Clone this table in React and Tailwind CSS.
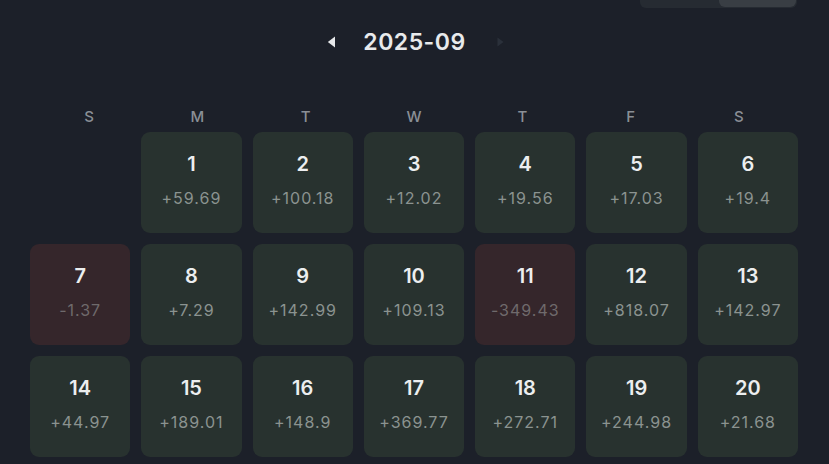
const DAYS = ["S", "M", "T", "W", "T", "F", "S"];

const CELLS = [
  null,
  { d: 1, v: "+59.69" },
  { d: 2, v: "+100.18" },
  { d: 3, v: "+12.02" },
  { d: 4, v: "+19.56" },
  { d: 5, v: "+17.03" },
  { d: 6, v: "+19.4" },
  { d: 7, v: "-1.37", loss: true },
  { d: 8, v: "+7.29" },
  { d: 9, v: "+142.99" },
  { d: 10, v: "+109.13" },
  { d: 11, v: "-349.43", loss: true },
  { d: 12, v: "+818.07" },
  { d: 13, v: "+142.97" },
  { d: 14, v: "+44.97" },
  { d: 15, v: "+189.01" },
  { d: 16, v: "+148.9" },
  { d: 17, v: "+369.77" },
  { d: 18, v: "+272.71" },
  { d: 19, v: "+244.98" },
  { d: 20, v: "+21.68" },
];

export default function App() {
  return (
    <div
      className="w-[829px] h-[464px] overflow-hidden bg-[#1c2029] text-[#e8eaec]"
      style={{ fontFamily: "Inter, 'Noto Sans', sans-serif" }}
    >
      {/* cut-off toggle at top right */}
      <div className="flex justify-end pr-[32px] -mt-[23px] h-[31px]">
        <div className="flex h-[31px] w-[157px] rounded-[6px] overflow-hidden bg-[#262b32]">
          <div className="w-[78px]" />
          <div className="flex-1 bg-[#393e44] rounded-[6px] m-[1px]" />
        </div>
      </div>

      {/* month switcher */}
      <div className="flex items-center justify-center h-[26px] mt-[21px] pl-[2px]">
        <svg width="9" height="12" viewBox="0 0 9 12" className="mr-[27px]">
          <path d="M8 0.5 L0.8 6 L8 11.5 Z" fill="#e6e8ea" />
        </svg>
        <span className="text-[23px] font-semibold tracking-[0.5px]">2025-09</span>
        <svg width="7" height="10" viewBox="0 0 7 10" className="ml-[31px]">
          <path d="M0.5 0.5 L6.5 5 L0.5 9.5 Z" fill="#2a303a" />
        </svg>
      </div>

      {/* weekday header */}
      <div className="grid grid-cols-7 pl-[35px] pr-[36px] mt-[51px] h-[20px] items-center">
        {DAYS.map((d, i) => (
          <div key={i} className="text-center text-[15px] font-medium text-[#8a8f96]">
            {d}
          </div>
        ))}
      </div>

      {/* days */}
      <div className="grid grid-cols-7 gap-[11px] pl-[30px] pr-[31px] mt-[6px]">
        {CELLS.map((c, i) =>
          c ? (
            <div
              key={i}
              className={`h-[101px] rounded-[9px] flex flex-col items-center pt-[19px] ${
                c.loss ? "bg-[#35262b]" : "bg-[#28322f]"
              }`}
            >
              <span className="text-[20px] font-semibold leading-[26px] text-[#eceeef]">{c.d}</span>
              <span
                className={`mt-[10px] text-[16px] tracking-[1px] leading-[22px] ${
                  c.loss ? "text-[#6f6a6c]" : "text-[#8b9390]"
                }`}
              >
                {c.v}
              </span>
            </div>
          ) : (
            <div key={i} className="h-[101px]" />
          )
        )}
      </div>
    </div>
  );
}
